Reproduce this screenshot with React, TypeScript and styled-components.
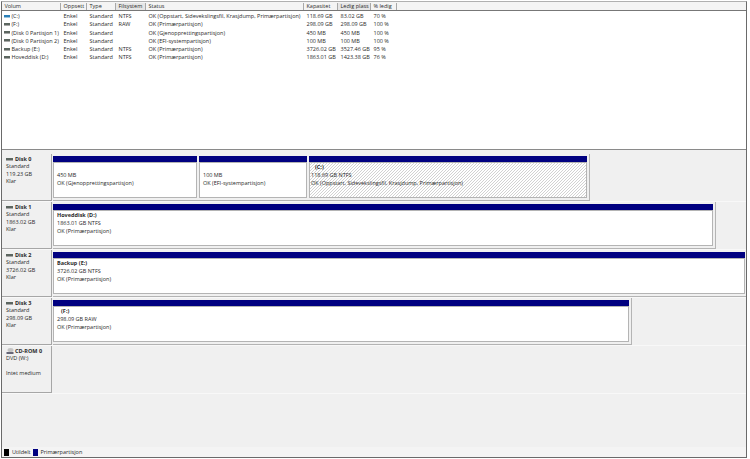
import React from 'react';
import styled, { createGlobalStyle } from 'styled-components';

interface Volume {
    name: string;
    type: string;
    fs: string;
    status: string;
    capacity: string;
    free: string;
    percent: string;
    system?: boolean;
}

interface Part {
    width: number;
    title?: string;
    size: string;
    status: string;
    hatched?: boolean;
}

interface Disk {
    name: string;
    kind: string;
    size: string;
    state: string;
    parts: Part[];
}

const volumes: Volume[] = [
    { name: '(C:)', type: 'Standard', fs: 'NTFS', status: 'OK (Oppstart, Sidevekslingsfil, Krasjdump, Primærpartisjon)', capacity: '118.69 GB', free: '83.02 GB', percent: '70 %', system: true },
    { name: '(F:)', type: 'Standard', fs: 'RAW', status: 'OK (Primærpartisjon)', capacity: '298.09 GB', free: '298.09 GB', percent: '100 %' },
    { name: '(Disk 0 Partisjon 1)', type: 'Standard', fs: '', status: 'OK (Gjenopprettingspartisjon)', capacity: '450 MB', free: '450 MB', percent: '100 %' },
    { name: '(Disk 0 Partisjon 2)', type: 'Standard', fs: '', status: 'OK (EFI-systempartisjon)', capacity: '100 MB', free: '100 MB', percent: '100 %' },
    { name: 'Backup (E:)', type: 'Standard', fs: 'NTFS', status: 'OK (Primærpartisjon)', capacity: '3726.02 GB', free: '3527.46 GB', percent: '95 %' },
    { name: 'Hoveddisk (D:)', type: 'Standard', fs: 'NTFS', status: 'OK (Primærpartisjon)', capacity: '1863.01 GB', free: '1423.38 GB', percent: '76 %' },
];

const disks: Disk[] = [
    {
        name: 'Disk 0',
        kind: 'Standard',
        size: '119.23 GB',
        state: 'Klar',
        parts: [
            { width: 146, size: '450 MB', status: 'OK (Gjenopprettingspartisjon)' },
            { width: 110, size: '100 MB', status: 'OK (EFI-systempartisjon)' },
            { width: 280, title: '(C:)', size: '118.69 GB NTFS', status: 'OK (Oppstart, Sidevekslingsfil, Krasjdump, Primærpartisjon)', hatched: true },
        ],
    },
    { name: 'Disk 1', kind: 'Standard', size: '1863.02 GB', state: 'Klar', parts: [{ width: 662, title: 'Hoveddisk  (D:)', size: '1863.01 GB NTFS', status: 'OK (Primærpartisjon)' }] },
    { name: 'Disk 2', kind: 'Standard', size: '3726.02 GB', state: 'Klar', parts: [{ width: 694, title: 'Backup  (E:)', size: '3726.02 GB NTFS', status: 'OK (Primærpartisjon)' }] },
    { name: 'Disk 3', kind: 'Standard', size: '298.09 GB', state: 'Klar', parts: [{ width: 578, title: '(F:)', size: '298.09 GB RAW', status: 'OK (Primærpartisjon)' }] },
];

const GlobalStyle = createGlobalStyle`
    html, body {
        margin: 0;
        padding: 0;
        background: #fff;
    }
    body {
        font-family: "Open Sans", "Liberation Sans", sans-serif;
        font-size: 5.5px;
        line-height: 8px;
        color: #2a2a2a;
    }
`;

const Window = styled.div`
    box-sizing: border-box;
    width: 746px;
    height: 457px;
    margin: 1px 0 0 1px;
    border-left: 1.5px solid #6a6a6a;
    border-right: 1.5px solid #6a6a6a;
    border-bottom: 1.5px solid #6a6a6a;
    border-top: 1px solid #b0b0b0;
    background: #f0f0f0;
    display: flex;
    flex-direction: column;
    overflow: hidden;
`;

const ListPane = styled.div`
    height: 147px;
    flex: none;
    background: #fff;
    border-bottom: 1px solid #8a8a8a;
`;

const columns = '59px 26px 29px 30px 158px 34px 33px 26px 1fr';

const HeaderRow = styled.div`
    display: grid;
    grid-template-columns: ${columns};
    height: 7px;
    padding-top: 1px;
    background: #f4f4f4;
    border-bottom: 1px solid #777;
    margin-bottom: 1px;
`;

const HeaderCell = styled.div<{ $active?: boolean }>`
    padding-left: 2.5px;
    line-height: 7px;
    white-space: nowrap;
    overflow: hidden;
    border-right: 1px solid #a8a8a8;
    background: ${({ $active }) => ($active ? '#e6e6e6' : 'transparent')};
    &:last-child {
        border-right: none;
    }
`;

const VolumeRow = styled.div`
    display: grid;
    grid-template-columns: ${columns};
    height: 8.25px;
    line-height: 8.25px;
`;

const Cell = styled.div`
    padding-left: 2.5px;
    white-space: nowrap;
    overflow: hidden;
`;

const NameCell = styled(Cell)`
    display: flex;
    align-items: center;
    gap: 2px;
    padding-left: 1.5px;
`;

const VolumeIcon = styled.span<{ $system?: boolean }>`
    flex: none;
    width: 6px;
    height: 2px;
    background: ${({ $system }) => ($system ? '#2a7fb8' : '#5c6660')};
    border-bottom: 1px solid ${({ $system }) => ($system ? '#9cc4dd' : '#a8a8a8')};
`;

const DiskPane = styled.div`
    flex: 1;
    display: flex;
    flex-direction: column;
    padding-top: 4px;
    min-height: 0;
`;

const DiskRow = styled.div`
    flex: none;
    box-sizing: border-box;
    height: 48px;
    display: flex;
    border-bottom: 1px solid #f8f8f8;
`;

const DiskLabel = styled.div`
    flex: none;
    box-sizing: border-box;
    width: 50px;
    padding: 2px 0 0 4px;
    background: #f0f0f0;
    border-right: 1px solid #a6a6a6;
    border-bottom: 1px solid #a6a6a6;
    line-height: 7.3px;
`;

const DiskName = styled.div`
    display: flex;
    align-items: center;
    gap: 1px;
    font-weight: 700;
`;

const DiskGlyph = styled.span`
    width: 7px;
    height: 2px;
    margin-right: 1px;
    background: #5c6660;
    border-bottom: 1px solid #a8a8a8;
`;

const Partitions = styled.div`
    flex: none;
    display: flex;
    margin-left: 1px;
    padding-top: 2px;
    align-items: flex-start;
    border-right: 1px solid #b4b4b4;
    border-bottom: 1px solid #b4b4b4;
`;

const Partition = styled.div<{ $width: number }>`
    flex: none;
    box-sizing: border-box;
    width: ${({ $width }) => $width}px;
    height: 42px;
    padding-right: 2px;
    display: flex;
    flex-direction: column;
`;

const Bar = styled.div`
    flex: none;
    height: 6px;
    background: #000080;
    border-bottom: 1.5px solid #b4b4b4;
`;

const PartBody = styled.div<{ $hatched?: boolean }>`
    flex: 1;
    box-sizing: border-box;
    padding: 1px 0 0 ${({ $hatched }) => ($hatched ? '1px' : '3px')};
    line-height: 7.6px;
    white-space: nowrap;
    overflow: hidden;
    border: ${({ $hatched }) => ($hatched ? '1.5px' : '1px')} solid #b4b4b4;
    border-top: none;
    background: ${({ $hatched }) => ($hatched
        ? 'repeating-linear-gradient(135deg, #fff 0 1.4142px, #d2d2d2 1.4142px 2.1213px)'
        : '#fff')};
`;

const PartTitle = styled.div<{ $blank?: boolean }>`
    font-weight: 700;
    min-height: 8px;
    padding-left: ${({ $blank }) => ($blank ? '4px' : '0')};
`;

const CdGlyph = styled.svg`
    width: 8px;
    height: 7px;
    flex: none;
`;

const Spacer = styled.div`
    flex: 1;
`;

const Legend = styled.div`
    flex: none;
    height: 10px;
    display: flex;
    align-items: center;
    gap: 2px;
    padding-left: 2px;
    background: #f4f4f4;
`;

const Swatch = styled.span<{ $color: string }>`
    width: 5px;
    height: 7px;
    background: ${({ $color }) => $color};
    margin-right: 1px;
`;

const App: React.FC = () => (
    <>
        <GlobalStyle />
        <Window>
            <ListPane>
                <HeaderRow>
                    <HeaderCell>Volum</HeaderCell>
                    <HeaderCell>Oppsett</HeaderCell>
                    <HeaderCell>Type</HeaderCell>
                    <HeaderCell $active>Filsystem</HeaderCell>
                    <HeaderCell>Status</HeaderCell>
                    <HeaderCell>Kapasitet</HeaderCell>
                    <HeaderCell $active>Ledig plass</HeaderCell>
                    <HeaderCell>% ledig</HeaderCell>
                    <HeaderCell />
                </HeaderRow>
                {volumes.map(volume => (
                    <VolumeRow key={volume.name}>
                        <NameCell>
                            <VolumeIcon $system={volume.system} />
                            {volume.name}
                        </NameCell>
                        <Cell>Enkel</Cell>
                        <Cell>{volume.type}</Cell>
                        <Cell>{volume.fs}</Cell>
                        <Cell>{volume.status}</Cell>
                        <Cell>{volume.capacity}</Cell>
                        <Cell>{volume.free}</Cell>
                        <Cell>{volume.percent}</Cell>
                    </VolumeRow>
                ))}
            </ListPane>
            <DiskPane>
                {disks.map(disk => (
                    <DiskRow key={disk.name}>
                        <DiskLabel>
                            <DiskName>
                                <DiskGlyph />
                                {disk.name}
                            </DiskName>
                            <div>{disk.kind}</div>
                            <div>{disk.size}</div>
                            <div>{disk.state}</div>
                        </DiskLabel>
                        <Partitions>
                            {disk.parts.map(part => (
                                <Partition key={part.size} $width={part.width}>
                                    <Bar />
                                    <PartBody $hatched={part.hatched}>
                                        <PartTitle $blank={part.title !== undefined && part.title.startsWith('(')}>
                                            {part.title}
                                        </PartTitle>
                                        <div>{part.size}</div>
                                        <div>{part.status}</div>
                                    </PartBody>
                                </Partition>
                            ))}
                        </Partitions>
                    </DiskRow>
                ))}
                <DiskRow>
                    <DiskLabel>
                        <DiskName>
                            <CdGlyph viewBox="0 0 8 7">
                                <ellipse cx="4.5" cy="2" rx="3" ry="2" fill="#c4c4c4" />
                                <rect x="0.5" y="4" width="7" height="2" fill="#667" />
                            </CdGlyph>
                            CD-ROM 0
                        </DiskName>
                        <div>DVD (W:)</div>
                        <div>&nbsp;</div>
                        <div>Intet medium</div>
                    </DiskLabel>
                </DiskRow>
                <Spacer />
                <Legend>
                    <Swatch $color="#000" />
                    <span>Utildelt</span>
                    <Swatch $color="#000080" />
                    <span>Primærpartisjon</span>
                </Legend>
            </DiskPane>
        </Window>
    </>
);

export default App;
